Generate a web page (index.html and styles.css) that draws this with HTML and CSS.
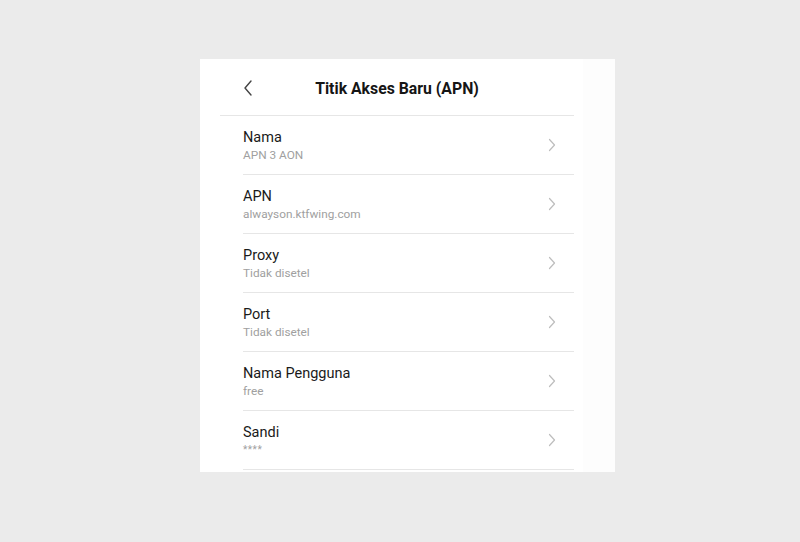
FILE: index.html
```html
<!DOCTYPE html>
<html>
<head>
<meta charset="utf-8">
<link rel="stylesheet" href="styles.css">
</head>
<body>
<div class="card">
  <div class="screen">
    <div class="header">
      <svg class="back" width="12" height="18" viewBox="0 0 12 18"><path d="M9 2 L3 9 L9 16" fill="none" stroke="#444" stroke-width="1.4" stroke-linecap="round" stroke-linejoin="round"/></svg>
      <div class="title">Titik Akses Baru (APN)</div>
    </div>
    <div class="list">
      <div class="row"><div class="text"><div class="label">Nama</div><div class="sub">APN 3 AON</div></div><svg class="chev" width="8" height="14" viewBox="0 0 8 14"><path d="M1.5 1.5 L6.5 7 L1.5 12.5" fill="none" stroke="#bdbdbd" stroke-width="1.2" stroke-linecap="round" stroke-linejoin="round"/></svg></div>
      <div class="row"><div class="text"><div class="label">APN</div><div class="sub">alwayson.ktfwing.com</div></div><svg class="chev" width="8" height="14" viewBox="0 0 8 14"><path d="M1.5 1.5 L6.5 7 L1.5 12.5" fill="none" stroke="#bdbdbd" stroke-width="1.2" stroke-linecap="round" stroke-linejoin="round"/></svg></div>
      <div class="row"><div class="text"><div class="label">Proxy</div><div class="sub">Tidak disetel</div></div><svg class="chev" width="8" height="14" viewBox="0 0 8 14"><path d="M1.5 1.5 L6.5 7 L1.5 12.5" fill="none" stroke="#bdbdbd" stroke-width="1.2" stroke-linecap="round" stroke-linejoin="round"/></svg></div>
      <div class="row"><div class="text"><div class="label">Port</div><div class="sub">Tidak disetel</div></div><svg class="chev" width="8" height="14" viewBox="0 0 8 14"><path d="M1.5 1.5 L6.5 7 L1.5 12.5" fill="none" stroke="#bdbdbd" stroke-width="1.2" stroke-linecap="round" stroke-linejoin="round"/></svg></div>
      <div class="row"><div class="text"><div class="label">Nama Pengguna</div><div class="sub">free</div></div><svg class="chev" width="8" height="14" viewBox="0 0 8 14"><path d="M1.5 1.5 L6.5 7 L1.5 12.5" fill="none" stroke="#bdbdbd" stroke-width="1.2" stroke-linecap="round" stroke-linejoin="round"/></svg></div>
      <div class="row"><div class="text"><div class="label">Sandi</div><div class="sub stars">****</div></div><svg class="chev" width="8" height="14" viewBox="0 0 8 14"><path d="M1.5 1.5 L6.5 7 L1.5 12.5" fill="none" stroke="#bdbdbd" stroke-width="1.2" stroke-linecap="round" stroke-linejoin="round"/></svg></div>
    </div>
  </div>
  <div class="ghost"></div>
</div>
</body>
</html>
```
FILE: styles.css
```css
html, body {
  margin: 0;
  padding: 0;
}
body {
  background: #ebebeb;
  width: 800px;
  height: 542px;
  font-family: Roboto, "Noto Sans", sans-serif;
  padding-top: 59px;
  box-sizing: border-box;
}
.card {
  margin-left: 200px;
  width: 415px;
  height: 413px;
  background: #fff;
  display: flex;
  overflow: hidden;
}
.screen {
  margin-left: 20px;
  width: 354px;
  display: flex;
  flex-direction: column;
}
.header {
  height: 56px;
  border-bottom: 1px solid #e6e6e6;
  display: flex;
  align-items: center;
  position: relative;
}
.back {
  margin-left: 22px;
  margin-top: 2px;
}
.title {
  position: absolute;
  left: 0;
  right: 0;
  top: 20px;
  text-align: center;
  font-size: 15.8px;
  font-weight: 700;
  color: #151515;
  padding-left: 0;
}
.list {
  display: flex;
  flex-direction: column;
}
.row {
  margin-left: 23px;
  height: 58px;
  border-bottom: 1px solid #e6e6e6;
  display: flex;
  align-items: center;
  justify-content: space-between;
  padding-right: 18px;
}
.text {
  display: flex;
  flex-direction: column;
  padding-top: 0;
}
.label {
  font-size: 14.5px;
  color: #1a1a1a;
  line-height: 19px;
}
.sub {
  font-size: 11.8px;
  color: #a0a0a0;
  line-height: 16px;
}
.stars {
  font-size: 10px;
  letter-spacing: 0.5px;
}
.ghost {
  flex: 1;
  margin-left: 9px;
  background: #fdfdfd;
}
```
